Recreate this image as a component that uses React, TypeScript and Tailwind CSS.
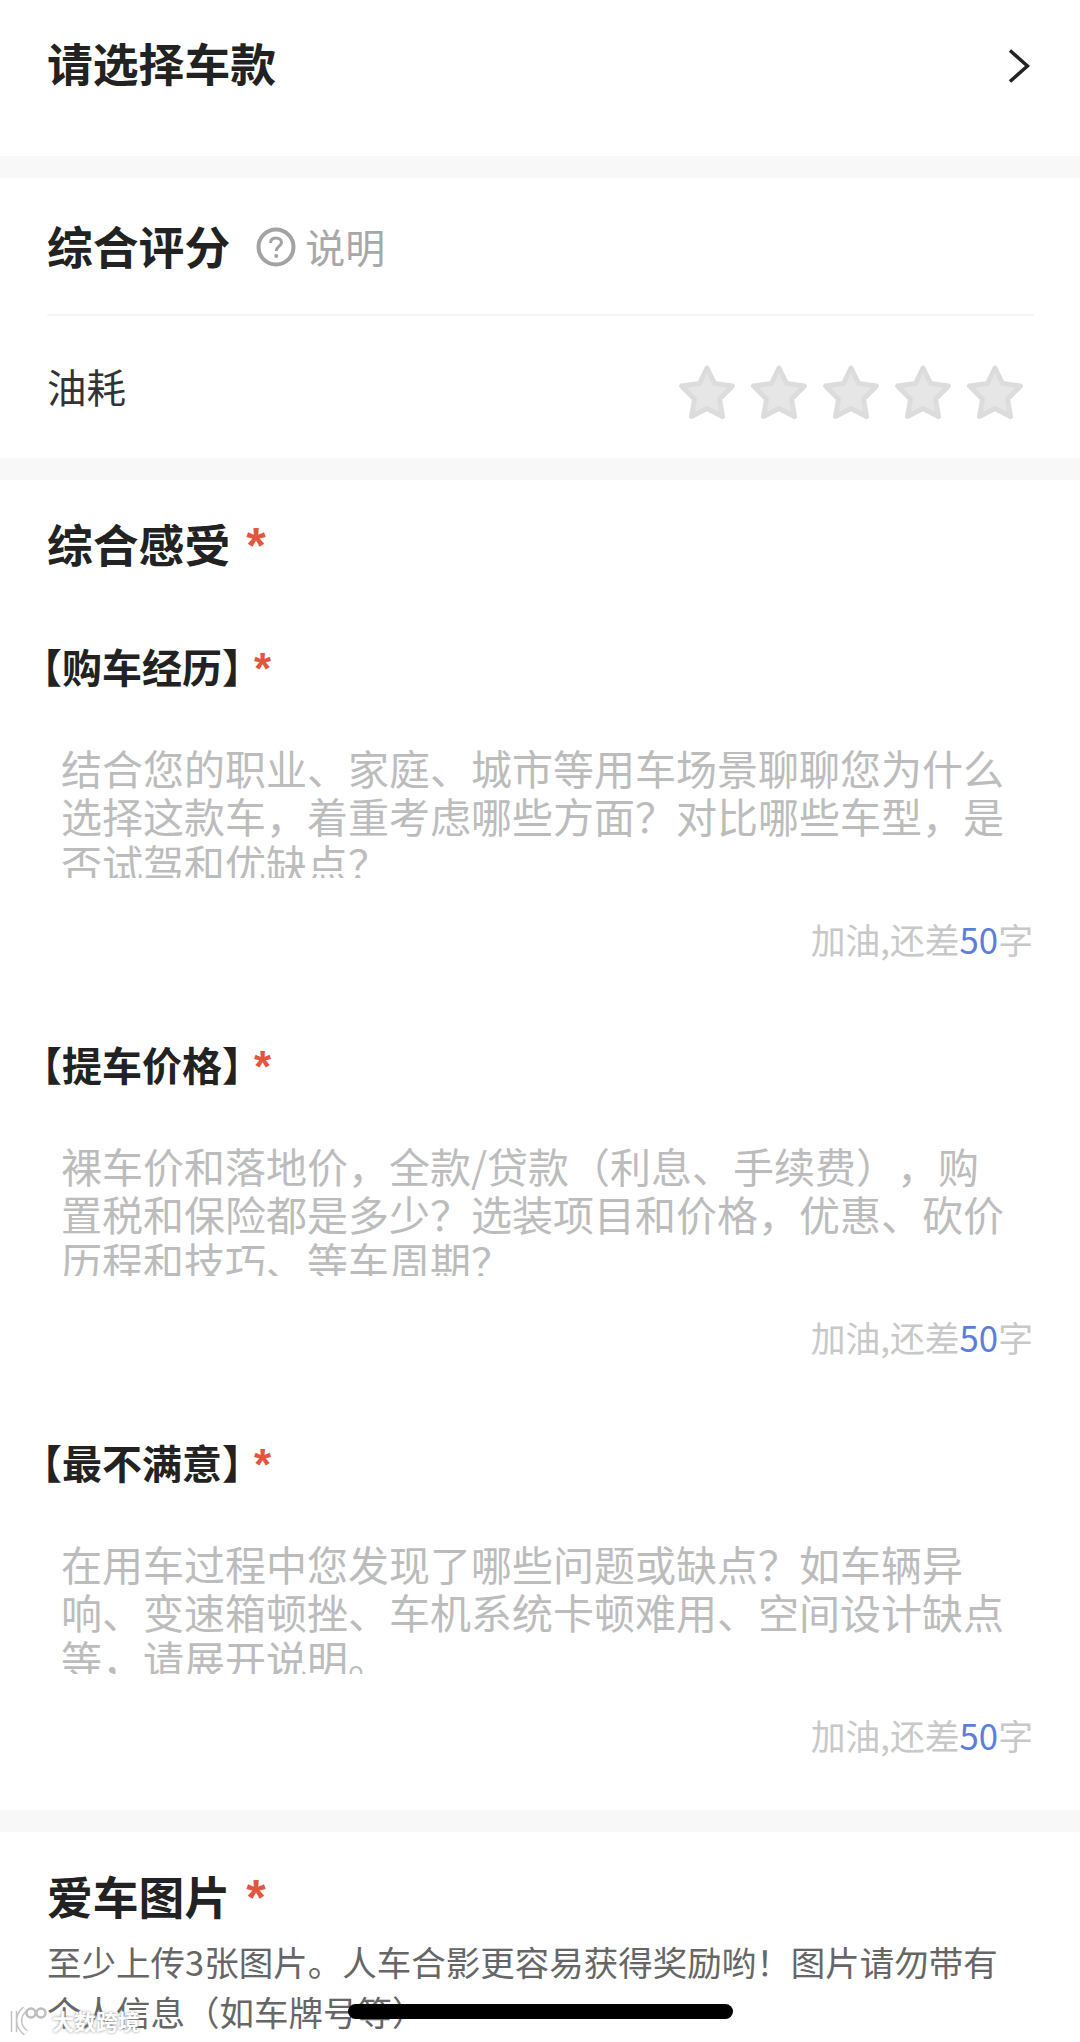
import React from "react";

const cjk = "font-['PingFang_SC','Noto_Sans_CJK_SC',sans-serif] [text-spacing-trim:space-all]";

const Gap = () => <div className="h-[22px] bg-[#f8f8f8]" />;

const Asterisk = ({ className }: { className: string }) => (
  <span className={`font-['Liberation_Sans',sans-serif] font-bold text-[#e2553f] ${className}`}>*</span>
);

const Star = () => (
  <svg width="60" height="57" viewBox="0 0 60 57">
    <path
      d="M30 4 L37.5 19.5 L55.5 22 L42.5 35 L45.5 52.5 L30 44.5 L14.5 52.5 L17.5 35 L4.5 22 L22.5 19.5 Z"
      fill="#e6e6e6"
      stroke="#dcdcdc"
      strokeWidth="5"
      strokeLinejoin="round"
    />
  </svg>
);

const FeelBlock = ({
  title,
  lines,
  last,
}: {
  title: string;
  lines: string[];
  last?: boolean;
}) => (
  <div className={last ? "pb-[53px]" : "pb-[78px]"}>
    <div className="flex h-[50px] items-center pl-[22px]">
      <span className="text-[40px] leading-[50px] font-semibold text-[#222]">{title}</span>
      <Asterisk className="ml-[-8px] mt-[6px] text-[44px] leading-[50px]" />
    </div>
    <div className="mt-[53px] ml-[61px] h-[134px] overflow-hidden text-[41px] leading-[47.5px] whitespace-nowrap text-[#bcbcbc]">
      {lines.map((line) => (
        <div key={line}>{line}</div>
      ))}
    </div>
    <div className="mt-[39px] mr-[47px] text-right text-[34.8px] leading-[44px] text-[#c8c8c8]">
      加油,还差<span className="text-[#5b7fd8]">50</span>字
    </div>
  </div>
);

const App = () => {
  return (
    <div className={`relative h-[2042px] w-[1080px] overflow-hidden bg-white ${cjk}`}>
      {/* 选车 */}
      <div className="flex h-[156px] items-start justify-between pt-[32px] pr-[50px] pl-[47px]">
        <span className="text-[45.8px] leading-[60px] font-semibold text-[#222]">请选择车款</span>
        <svg className="mt-[17px]" width="22" height="34" viewBox="0 0 22 34" fill="none">
          <path d="M2 1.5 L19.5 17 L2 32.5" stroke="#222" strokeWidth="3.5" />
        </svg>
      </div>
      <Gap />

      {/* 综合评分 */}
      <div className="h-[280px] pr-[46px] pl-[47px] pt-[37px]">
        <div className="flex h-[60px] items-center">
          <span className="text-[45.8px] leading-[60px] font-semibold text-[#222]">综合评分</span>
          <svg className="ml-[26px] mt-[4px]" width="40" height="40" viewBox="0 0 40 40" fill="none">
            <circle cx="20" cy="20" r="17.5" stroke="#a3a3a3" strokeWidth="4" />
            <path
              d="M14.5 16 C14.5 12.5 17 11 20 11 C23 11 25.5 12.8 25.5 15.6 C25.5 19 20.2 19.5 20.2 24"
              stroke="#a3a3a3"
              strokeWidth="3"
            />
            <circle cx="20.2" cy="29" r="2" fill="#a3a3a3" />
          </svg>
          <span className="ml-[9px] mt-[2px] text-[40px] leading-[60px] text-[#a8a8a8]">说明</span>
        </div>
        <div className="mt-[39px] h-[2px] bg-[#f5f5f5]" />
        <div className="flex items-start justify-between pr-[9px]">
          <span className="mt-[40px] text-[39.5px] leading-[60px] text-[#333]">油耗</span>
          <div className="mt-[48px] flex gap-[12px]">
            <Star />
            <Star />
            <Star />
            <Star />
            <Star />
          </div>
        </div>
      </div>
      <Gap />

      {/* 综合感受 */}
      <div className="pt-[33px]">
        <div className="mb-[68px] flex h-[60px] items-center pl-[47px]">
          <span className="text-[45.8px] leading-[60px] font-semibold text-[#222]">综合感受</span>
          <Asterisk className="ml-[16px] mt-[6px] text-[50px] leading-[60px]" />
        </div>
        <FeelBlock
          title="【购车经历】"
          lines={[
            "结合您的职业、家庭、城市等用车场景聊聊您为什么",
            "选择这款车，着重考虑哪些方面？对比哪些车型，是",
            "否试驾和优缺点？",
          ]}
        />
        <FeelBlock
          title="【提车价格】"
          lines={[
            "裸车价和落地价，全款/贷款（利息、手续费），购",
            "置税和保险都是多少？选装项目和价格，优惠、砍价",
            "历程和技巧、等车周期？",
          ]}
        />
        <FeelBlock
          last
          title="【最不满意】"
          lines={[
            "在用车过程中您发现了哪些问题或缺点？如车辆异",
            "响、变速箱顿挫、车机系统卡顿难用、空间设计缺点",
            "等，请展开说明。",
          ]}
        />
      </div>
      <Gap />

      {/* 爱车图片 */}
      <div className="pl-[47px] pt-[33px]">
        <div className="flex h-[60px] items-center">
          <span className="text-[45.8px] leading-[60px] font-semibold text-[#222]">爱车图片</span>
          <Asterisk className="ml-[16px] mt-[6px] text-[50px] leading-[60px]" />
        </div>
        <div className="mt-[11px] text-[34.5px] leading-[50px] text-[#666]">
          <div className="whitespace-nowrap">至少上传3张图片。人车合影更容易获得奖励哟！图片请勿带有</div>
          <div className="whitespace-nowrap">个人信息（如车牌号等）</div>
        </div>
      </div>

      {/* 水印 */}
      <div className="absolute top-[2005px] left-[10px] flex items-center gap-[5px] [text-shadow:0_0_3px_#8a8a8a]">
        <svg width="37" height="30" viewBox="0 0 37 30" fill="none">
          <path d="M4 6 L4 27 M15 4 C7 11 7 21 16 28" stroke="#aaa" strokeWidth="6.5" opacity="0.7" />
          <path d="M4 6 L4 27 M15 4 C7 11 7 21 16 28" stroke="#fff" strokeWidth="3.5" />
          <circle cx="21" cy="8" r="4.5" stroke="#bdbdbd" strokeWidth="2.5" />
          <circle cx="31" cy="8" r="4.5" stroke="#bdbdbd" strokeWidth="2.5" />
        </svg>
        <span className="text-[22px] leading-[30px] font-semibold text-white">大数跨境</span>
      </div>

      {/* Home 条 */}
      <div className="absolute top-[2004px] left-[348px] h-[15px] w-[385px] rounded-full bg-black" />
    </div>
  );
};

export default App;
